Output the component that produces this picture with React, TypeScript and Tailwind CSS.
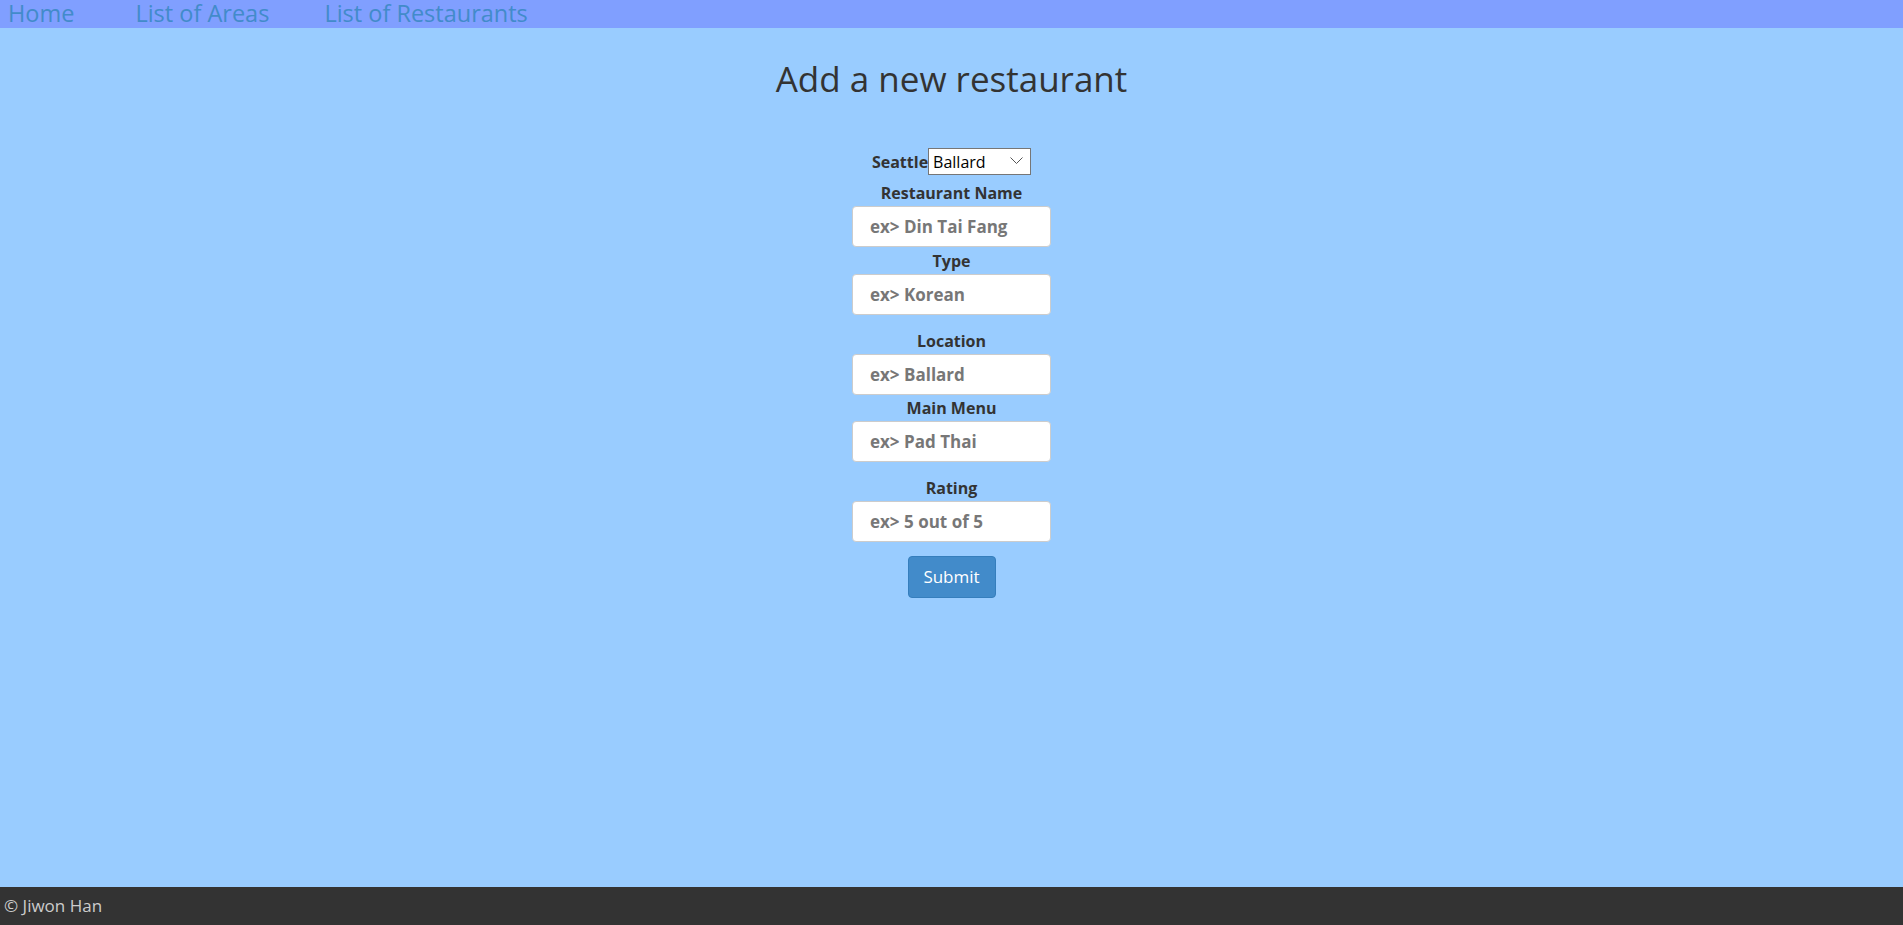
import { useState } from "react";

const areas = ["Ballard", "Capitol Hill", "Downtown", "Fremont", "University District"];

const fields = [
  { label: "Restaurant Name", placeholder: "ex> Din Tai Fang", gap: "mt-[6px]" },
  { label: "Type", placeholder: "ex> Korean", gap: "mt-[2px]" },
  { label: "Location", placeholder: "ex> Ballard", gap: "mt-[14px]" },
  { label: "Main Menu", placeholder: "ex> Pad Thai", gap: "mt-[1px]" },
  { label: "Rating", placeholder: "ex> 5 out of 5", gap: "mt-[14px]" },
];

export default function App() {
  const [area, setArea] = useState("Ballard");

  return (
    <div className="flex min-h-[925px] flex-col bg-[#99ccff] font-['Open_Sans',sans-serif] text-[#333333]">
      {/* Nav */}
      <nav className="flex h-[28px] items-start bg-[#809fff] pl-[8px] text-[23.5px] leading-[27px] text-[#428bca]">
        <a href="#">Home</a>
        <a href="#" className="ml-[61px]">List of Areas</a>
        <a href="#" className="ml-[55px]">List of Restaurants</a>
      </nav>

      <main className="flex flex-1 flex-col items-center">
        <h1 className="mt-[31px] text-[35px] leading-[40px]">Add a new restaurant</h1>

        <form className="mt-[49px] flex flex-col items-center" onSubmit={(e) => e.preventDefault()}>
          <div className="flex items-center">
            <label className="text-[16px] font-bold">Seattle</label>
            <div className="relative">
              <select
                value={area}
                onChange={(e) => setArea(e.target.value)}
                className="h-[27px] w-[103px] appearance-none border border-[#767676] bg-white pl-[4px] text-[16px] leading-none text-black"
              >
                {areas.map((a) => (
                  <option key={a}>{a}</option>
                ))}
              </select>
              <svg
                className="pointer-events-none absolute top-[9px] right-[8px]"
                width="13"
                height="8"
                viewBox="0 0 13 8"
                fill="none"
                stroke="#555555"
                strokeWidth="1"
              >
                <path d="M0.5 0.5 L6.5 6.5 L12.5 0.5" />
              </svg>
            </div>
          </div>

          {fields.map((f) => (
            <div key={f.label} className={`flex flex-col items-center ${f.gap}`}>
              <label className="text-[16px] leading-[25px] font-bold">{f.label}</label>
              <input
                type="text"
                placeholder={f.placeholder}
                className="h-[41px] w-[199px] rounded-[4px] border border-[#cccccc] bg-white px-[17px] text-[17px] font-bold placeholder:text-[#777777]"
              />
            </div>
          ))}

          <button
            type="submit"
            className="mt-[14px] h-[42px] w-[88px] rounded-[4px] border border-[#357ebd] bg-[#428bca] text-[17px] text-white"
          >
            Submit
          </button>
        </form>
      </main>

      {/* Footer */}
      <footer className="flex h-[38px] items-center bg-[#333333] pl-[4px] text-[17px] text-[#cccccc]">
        © Jiwon Han
      </footer>
    </div>
  );
}
